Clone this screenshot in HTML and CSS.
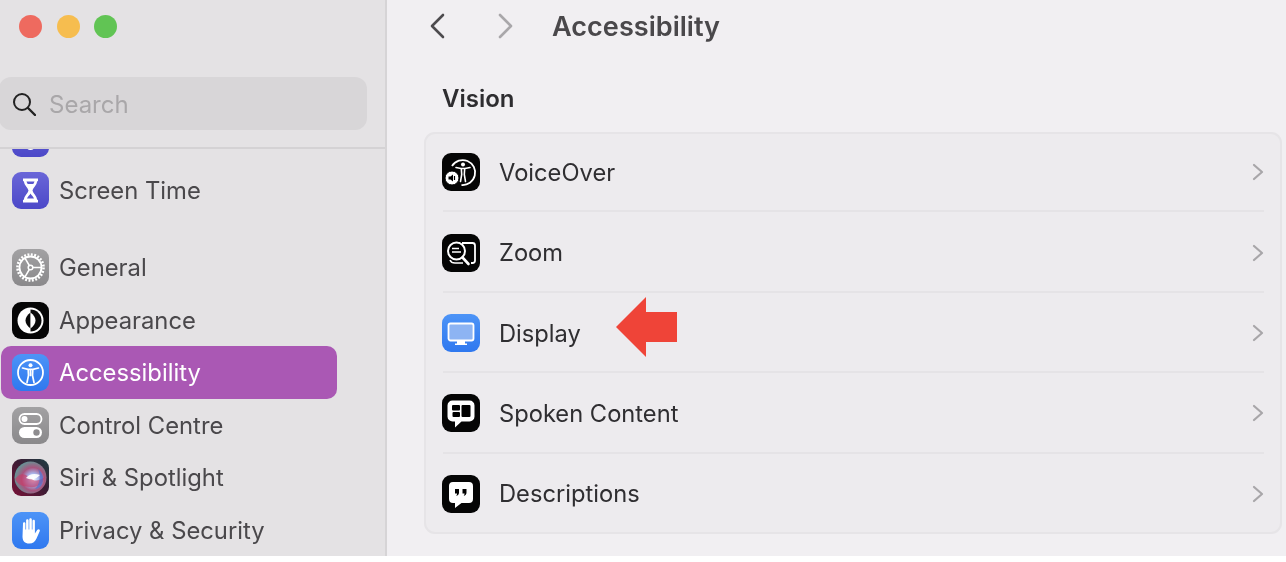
FILE: index.html
```html
<!DOCTYPE html>
<html lang="en">
<head>
<meta charset="utf-8">
<title>Accessibility</title>
<link rel="stylesheet" href="styles.css">
</head>
<body>
<div class="app">
  <aside class="sidebar">
    <div class="lights"><span class="light red"></span><span class="light yellow"></span><span class="light green"></span></div>
    <div class="search">
      <svg class="search-icon" viewBox="0 0 24 24"><circle cx="10" cy="10" r="8" fill="none" stroke="#222" stroke-width="2"/><path d="M16 16l7 7" stroke="#222" stroke-width="2.400" stroke-linecap="round"/></svg>
      <span class="search-label">Search</span>
    </div>
    <div class="side-list">
      <div class="side-item"><svg class="side-icon ic-indigo" viewBox="0 0 37 37"><circle cx="18.500" cy="26" r="4" fill="#fff"/></svg></div>
      <div class="side-item"><svg class="side-icon ic-indigo" viewBox="0 0 37 37"><path d="M11 6.500h15v2.500l-1 .5c0 3.500-3.800 6-4.500 9 .7 3 4.500 5.500 4.500 9l1 .5v2.500H11V28l1-.5c0-3.500 3.800-6 4.500-9-.7-3-4.500-5.500-4.500-9l-1-.5z" fill="#fff"/><path d="M14.500 9.500h8c-.3 1-.7 1.700-1.200 2.500h-5.600c-.5-.8-.9-1.500-1.200-2.500zM18.500 21.500c-.8 1.500-2.600 3-3.500 5h7c-.9-2-2.700-3.500-3.500-5z" fill="#5a55cf"/></svg><span>Screen Time</span></div>
      <div class="side-item group-start"><svg class="side-icon ic-grey" viewBox="0 0 37 37"><circle cx="18.500" cy="18.500" r="11" fill="none" stroke="#fff" stroke-width="1.800"/><circle cx="18.500" cy="18.500" r="13" fill="none" stroke="#fff" stroke-width="2.600" stroke-dasharray="1.900 1.500"/><circle cx="18.500" cy="18.500" r="2.300" fill="none" stroke="#fff" stroke-width="1.500"/><path d="M20.800 18.500h8.500M17.300 16.500l-4.300-7.400M17.300 20.500L13 27.900" stroke="#fff" stroke-width="1.500"/></svg><span>General</span></div>
      <div class="side-item"><svg class="side-icon ic-black" viewBox="0 0 37 37"><circle cx="18.500" cy="18.500" r="13" fill="#fff"/><path d="M18.500 7.500a11 11 0 0 1 0 22z" fill="#0a0a0a"/><path d="M18.500 10.500c-3 2.400-5 5-5 8s2 5.600 5 8z" fill="#0a0a0a"/><path d="M18.500 10.500c3 2.400 5 5 5 8s-2 5.600-5 8z" fill="#fff"/></svg><span>Appearance</span></div>
      <div class="side-item selected"><svg class="side-icon ic-blue" viewBox="0 0 37 37"><circle cx="18.500" cy="18.500" r="12.500" fill="none" stroke="#fff" stroke-width="1.800"/><circle cx="18.500" cy="11.200" r="2" fill="#fff"/><path d="M10.500 14l5.500 1.300h5L26.500 14M18.500 15.500v6M16.200 15.500l.3 6-1.500 7M20.800 15.500l-.3 6 1.500 7" fill="none" stroke="#fff" stroke-width="1.700" stroke-linecap="round"/></svg><span>Accessibility</span></div>
      <div class="side-item"><svg class="side-icon ic-grey" viewBox="0 0 37 37"><rect x="7.500" y="7" width="22" height="10" rx="5" fill="none" stroke="#fff" stroke-width="1.800"/><circle cx="12.500" cy="12" r="3" fill="#fff"/><rect x="7" y="20" width="23" height="11" rx="5.500" fill="#fff"/><circle cx="24.500" cy="25.500" r="3.200" fill="#8d8c8e"/></svg><span>Control Centre</span></div>
      <div class="side-item"><svg class="side-icon ic-siri" viewBox="0 0 37 37"><defs><radialGradient id="siri" cx="58%" cy="55%" r="60%"><stop offset="0" stop-color="#fff"/><stop offset=".28" stop-color="#a9b8ee"/><stop offset=".6" stop-color="#a8557f"/><stop offset="1" stop-color="#5f9a98"/></radialGradient></defs><circle cx="18.500" cy="18.500" r="16" fill="url(#siri)"/><path d="M3 20c6-7 10-5 15-1s9 3 15-1c-3 8-9 11-15 10S6 27 3 20z" fill="#c93a66" opacity=".6"/><path d="M26 10c5 4 7 10 3 17-2 2-4 3-6 3 5-5 6-13 3-20z" fill="#3f72d8" opacity=".6"/><path d="M14 19c3-4 8-5 14-3-3 3-7 6-14 3z" fill="#fff" opacity=".9"/></svg><span>Siri &amp; Spotlight</span></div>
      <div class="side-item"><svg class="side-icon ic-blue" viewBox="0 0 37 37"><path d="M11 11.500c0-1.700 2.400-1.700 2.400 0v6h.7V8.500c0-1.700 2.500-1.700 2.500 0v9h.7V7.500c0-1.700 2.500-1.700 2.500 0v10h.7V9c0-1.700 2.400-1.700 2.400 0v12.500l2.300-3.500c1.200-1.700 3.300-.4 2.500 1.300l-3.200 7.200c-1.300 3-3.600 5-7.200 5-4.600 0-6.800-2.600-6.800-7z" fill="#fff"/></svg><span>Privacy &amp; Security</span></div>
    </div>
  </aside>
  <main class="content">
    <header class="toolbar">
      <svg class="nav-icon" viewBox="0 0 16 26"><path d="M14 2L3 13l11 11" fill="none" stroke="#4d4b4e" stroke-width="2.600" stroke-linecap="round" stroke-linejoin="round"/></svg>
      <svg class="nav-icon fwd" viewBox="0 0 16 26"><path d="M2 2l11 11L2 24" fill="none" stroke="#a9a7aa" stroke-width="2.600" stroke-linecap="round" stroke-linejoin="round"/></svg>
      <h1>Accessibility</h1>
    </header>
    <h2>Vision</h2>
    <section class="card">
      <div class="row"><svg class="row-icon ic-black" viewBox="0 0 38 38"><path d="M10 13a12.500 12.500 0 1 1 9.500 19" fill="none" stroke="#fff" stroke-width="1.800"/><circle cx="21" cy="11.500" r="2" fill="#fff"/><path d="M14 14.500l5 1h4l5-1M19.300 15.500l.4 6-1.200 7M22.700 15.500l-.4 6 1.200 7" fill="none" stroke="#fff" stroke-width="1.600" stroke-linecap="round"/><circle cx="10" cy="25" r="7" fill="#fff" stroke="#000" stroke-width="1"/><path d="M6.500 23.500h2l2.500-2v7l-2.500-2h-2z" fill="#000"/><path d="M12.500 23v4" stroke="#000" stroke-width="1.200"/></svg><span>VoiceOver</span><svg class="chev" viewBox="0 0 12 18"><path d="M2 2l8 7-8 7" fill="none" stroke="#a8a6a9" stroke-width="2.200" stroke-linecap="round" stroke-linejoin="round"/></svg></div>
      <div class="row"><svg class="row-icon ic-black" viewBox="0 0 38 38"><path d="M20 9h10.500a2.500 2.500 0 0 1 2.500 2.500v15a2.500 2.500 0 0 1-2.500 2.500H29" fill="none" stroke="#fff" stroke-width="1.800"/><path d="M12 9h6" stroke="#fff" stroke-width="1.800"/><circle cx="14.500" cy="17" r="8.500" fill="#000" stroke="#fff" stroke-width="2"/><path d="M10 14.500h7M10 18h9" stroke="#fff" stroke-width="1.500"/><path d="M20.500 23.500l6 6.500" stroke="#fff" stroke-width="2.600" stroke-linecap="round"/><path d="M8 26c1 2.500 3 3 5 3h8" fill="none" stroke="#fff" stroke-width="1.600"/></svg><span>Zoom</span><svg class="chev" viewBox="0 0 12 18"><path d="M2 2l8 7-8 7" fill="none" stroke="#a8a6a9" stroke-width="2.200" stroke-linecap="round" stroke-linejoin="round"/></svg></div>
      <div class="row"><svg class="row-icon ic-blue" viewBox="0 0 38 38"><rect x="6.500" y="9.500" width="25" height="17" rx="2" fill="#8db4f3" stroke="#fff" stroke-width="1.800"/><path d="M15 27h8v2.500h2V31H13v-1.500h2z" fill="#fff"/></svg><span>Display</span><svg class="chev" viewBox="0 0 12 18"><path d="M2 2l8 7-8 7" fill="none" stroke="#a8a6a9" stroke-width="2.200" stroke-linecap="round" stroke-linejoin="round"/></svg></div>
      <div class="row"><svg class="row-icon ic-black" viewBox="0 0 38 38"><path d="M10.500 6.500h17a5 5 0 0 1 5 5v11a5 5 0 0 1-5 5h-8L13 33.500v-6h-2.500a5 5 0 0 1-5-5v-11a5 5 0 0 1 5-5z" fill="#fff"/><rect x="10" y="11" width="8" height="5.500" rx="1" fill="#000"/><rect x="10.500" y="18" width="7.500" height="5" rx="1" fill="#000"/><rect x="19.500" y="11" width="9" height="12" rx="1" fill="#000"/></svg><span>Spoken Content</span><svg class="chev" viewBox="0 0 12 18"><path d="M2 2l8 7-8 7" fill="none" stroke="#a8a6a9" stroke-width="2.200" stroke-linecap="round" stroke-linejoin="round"/></svg></div>
      <div class="row"><svg class="row-icon ic-black" viewBox="0 0 38 38"><path d="M11 7h16a4 4 0 0 1 4 4v13a4 4 0 0 1-4 4h-7.500L13 33v-5h-2a4 4 0 0 1-4-4V11a4 4 0 0 1 4-4z" fill="#fff"/><path d="M13 14h4v3.500c0 2-1 3-2.800 3.300.7-.8.9-1.600.9-2.300H13zM20.500 14h4v3.500c0 2-1 3-2.800 3.300.7-.8.9-1.600.9-2.300h-2.100z" fill="#000"/></svg><span>Descriptions</span><svg class="chev" viewBox="0 0 12 18"><path d="M2 2l8 7-8 7" fill="none" stroke="#a8a6a9" stroke-width="2.200" stroke-linecap="round" stroke-linejoin="round"/></svg></div>
    </section>
    <svg class="arrow" viewBox="0 0 62 60"><path d="M0 30L30 0v15h31v30H30v15z" fill="#ef4438"/></svg>
  </main>
</div>
</body>
</html>
```
FILE: styles.css
```css
* { box-sizing: border-box; }
html, body { margin: 0; padding: 0; background: #fff; }
body { width: 1286px; height: 562px; overflow: hidden; font-family: Inter, "Noto Sans", sans-serif; }
.app { display: flex; height: 556px; filter: blur(.45px); }
.sidebar { width: 387px; flex: none; display: flex; flex-direction: column; background: #e4e2e4; border-right: 2px solid #d6d4d6; overflow: hidden; }
.lights { display: flex; gap: 14.500px; padding: 15px 0 0 19px; height: 77px; }
.light { width: 23px; height: 23px; border-radius: 50%; }
.red { background: #ee6a5f; }
.yellow { background: #f6bd4f; }
.green { background: #61c454; }
.search { display: flex; align-items: center; gap: 13px; width: 368px; height: 53px; margin-left: -1px; padding-left: 13px; border-radius: 12px; background: #d8d6d8; color: #a9a7a9; font-size: 24px; flex: none; }
.search-icon { width: 24px; height: 24px; }
.search-label { padding-top: 2px; }
.side-list { margin-top: 17px; border-top: 2px solid #d4d2d4; flex: 1; overflow: hidden; }
.side-item { display: flex; align-items: center; gap: 10px; height: 52.500px; margin: 0 48px 0 1px; padding-left: 11px; border-radius: 10px; color: #4a484b; font-size: 23.800px; }
.side-item:first-child { margin-top: -37.200px; }
.group-start { margin-top: 24.500px; }
.selected { background: #aa58b4; color: #fff; }
.side-icon { width: 37px; height: 37px; border-radius: 9px; flex: none; display: block; }
.ic-indigo { background: linear-gradient(#6a66d8, #4c48c8); }
.ic-grey { background: linear-gradient(#a2a1a3, #8a898b); }
.ic-black { background: #050505; }
.ic-blue { background: linear-gradient(#4d94f7, #2f78ef); }
.ic-siri { background: linear-gradient(45deg, #7a1238, #3a1c34 55%, #1d3f44); }
.content { flex: 1; position: relative; background: #f1eff2; padding-left: 37px; min-width: 0; }
.toolbar { display: flex; align-items: center; height: 52px; }
.nav-icon { width: 16px; height: 26px; margin-left: 5px; }
.nav-icon.fwd { margin-left: 53px; }
.toolbar h1 { margin: 0 0 0 38px; font-size: 27.100px; font-weight: 600; color: #4a484b; }
h2 { margin: 32px 0 0 18px; height: 48px; font-size: 24px; font-weight: 600; color: #2e2d30; line-height: 29px; }
.card { width: 858px; height: 402px; box-shadow: inset 0 0 0 2px #e6e4e7; border-radius: 11px; background: #edebee; display: flex; flex-direction: column; padding: 0 18px; }
.row { position: relative; flex: 1; display: flex; align-items: center; gap: 19px; color: #2f2e31; font-size: 23.700px; }
.row:not(:last-child)::after { content: ""; position: absolute; left: 1px; right: 0; bottom: 0; height: 2px; background: #e5e3e6; }
.row-icon { width: 38px; height: 38px; border-radius: 9px; flex: none; }
.chev { width: 12px; height: 18px; margin-left: auto; }
.arrow { position: absolute; left: 229px; top: 297px; width: 62px; height: 60px; }
```
